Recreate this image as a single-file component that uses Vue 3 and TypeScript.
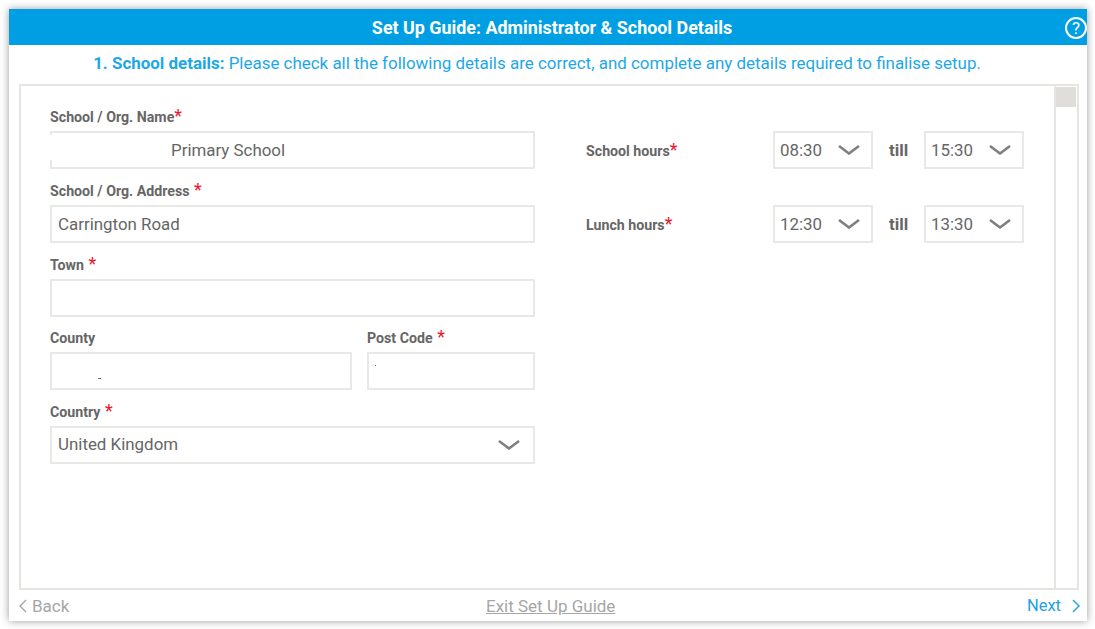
<template>
  <div class="page">
    <div class="guide">
      <header class="guide-head">
        <h1 class="guide-title">Set Up Guide: Administrator &amp; School Details</h1>
        <span class="help">?</span>
      </header>
      <p class="intro"><b>1. School details:</b> Please check all the following details are correct, and complete any details required to finalise setup.</p>
      <div class="panel">
        <div class="panel-body">
          <div class="address">
            <div class="field col-2">
              <label>School / Org. Name<span class="req tight">*</span></label>
              <div class="input name-input">Primary School<span class="redact"></span></div>
            </div>
            <div class="field col-2">
              <label>School / Org. Address <span class="req">*</span></label>
              <div class="input">Carrington Road</div>
            </div>
            <div class="field col-2">
              <label>Town <span class="req">*</span></label>
              <div class="input"></div>
            </div>
            <div class="field">
              <label>County</label>
              <div class="input"><span class="speck county-speck"></span></div>
            </div>
            <div class="field">
              <label>Post Code <span class="req">*</span></label>
              <div class="input"><span class="speck post-speck"></span></div>
            </div>
            <div class="field col-2">
              <label>Country <span class="req">*</span></label>
              <div class="input select country">
                <span>United Kingdom</span>
                <svg class="chev" width="22" height="10" viewBox="0 0 22 10" fill="none" stroke="#808080" stroke-width="2.6"><polyline points="1,1 11,8.5 21,1" /></svg>
              </div>
            </div>
          </div>
          <div class="hours">
            <div v-for="row in hours" :key="row.label" class="hours-row">
              <label class="hours-label">{{ row.label }}<span class="req tight">*</span></label>
              <div class="input select time">
                <span>{{ row.from }}</span>
                <svg class="chev" width="22" height="10" viewBox="0 0 22 10" fill="none" stroke="#808080" stroke-width="2.6"><polyline points="1,1 11,8.5 21,1" /></svg>
              </div>
              <span class="till">till</span>
              <div class="input select time">
                <span>{{ row.to }}</span>
                <svg class="chev" width="22" height="10" viewBox="0 0 22 10" fill="none" stroke="#808080" stroke-width="2.6"><polyline points="1,1 11,8.5 21,1" /></svg>
              </div>
            </div>
          </div>
        </div>
        <div class="scrollbar"><div class="thumb"></div></div>
      </div>
      <footer class="guide-foot">
        <a class="back">
          <svg width="8" height="14" viewBox="0 0 8 14" fill="none" stroke="#a6a6a6" stroke-width="1.4"><polyline points="7,1 1,7 7,13" /></svg>
          Back
        </a>
        <a class="exit">Exit Set Up Guide</a>
        <a class="next">
          Next
          <svg width="8" height="14" viewBox="0 0 8 14" fill="none" stroke="#1f9fe6" stroke-width="1.4"><polyline points="1,1 7,7 1,13" /></svg>
        </a>
      </footer>
    </div>
  </div>
</template>

<script setup lang="ts">
interface HoursRow { label: string; from: string; to: string }

const hours: HoursRow[] = [
  { label: 'School hours', from: '08:30', to: '15:30' },
  { label: 'Lunch hours', from: '12:30', to: '13:30' }
]
</script>

<style>
html, body { background: #fff; }
</style>

<style scoped>
.page { width: 1095px; height: 629px; box-sizing: border-box; padding: 9px 8px 8px 9px; font-family: Roboto, "Liberation Sans", sans-serif; overflow: hidden; }
.guide { height: 612px; background: #fff; box-shadow: 0 0 8px rgba(0,0,0,0.4); display: flex; flex-direction: column; }
.guide-head { position: relative; height: 36px; flex: none; box-sizing: border-box; padding-left: 8px; background: #009fe3; display: flex; align-items: center; justify-content: center; }
.guide-title { margin: 0; color: #fff; font-size: 17.9px; font-weight: 700; }
.help { position: absolute; right: 0; top: 8px; width: 18px; height: 18px; border: 2px solid #fff; border-radius: 50%; color: #fff; font-size: 17px; line-height: 18px; text-align: center; }
.intro { margin: 0; height: 39px; flex: none; box-sizing: border-box; padding: 8px 22px 0 0; text-align: center; color: #1ea7e8; font-size: 16.95px; line-height: 20px; }
.panel { margin: 0 8px 0 10px; height: 506px; box-sizing: border-box; border: 2px solid #e6e5e1; display: flex; flex: none; }
.panel-body { flex: 1; display: flex; padding: 21px 0 0 29px; }
.address { width: 485px; display: grid; grid-template-columns: 302px 168px; column-gap: 15px; grid-auto-rows: 73.75px; align-content: start; }
.field { display: flex; flex-direction: column; }
.col-2 { grid-column: span 2; }
label { height: 24px; color: #666; font-size: 14.2px; font-weight: 700; line-height: 20px; }
.req { margin-left: 1px; color: #f0142c; font-size: 18px; font-weight: 400; line-height: 14px; }
.tight { margin-left: 0; }
.input { position: relative; height: 38px; box-sizing: border-box; border: 2px solid #e8e8e6; padding: 0 6px; color: #666; font-size: 16.9px; line-height: 34px; }
.name-input { padding-left: 119px; }
.redact { position: absolute; left: -2px; top: 2px; width: 2px; height: 25px; background: #fff; }
.speck { position: absolute; background: #666; }
.county-speck { left: 46px; top: 24px; width: 3px; height: 1px; }
.post-speck { left: 6px; top: 11px; width: 1px; height: 1px; }
.select { display: flex; align-items: center; justify-content: space-between; padding-right: 13px; }
.country { padding-bottom: 2px; }
.country .chev { margin-top: 2px; }
.hours { display: flex; flex-direction: column; margin-left: 51px; padding-top: 24px; }
.hours-row { height: 74px; display: flex; align-items: flex-start; }
.hours-label { width: 187px; height: 38px; line-height: 41px; }
.time { width: 100px; padding-left: 5px; padding-right: 11px; }
.till { width: 51px; height: 38px; text-align: center; color: #666; font-size: 17px; font-weight: 700; line-height: 38px; }
.scrollbar { width: 23px; box-sizing: border-box; flex: none; margin-left: auto; border-left: 2px solid #e6e5e1; padding-top: 1px; }
.thumb { width: 20px; height: 20px; background: #dfdedb; }
.guide-foot { flex: 1; display: flex; align-items: center; justify-content: space-between; position: relative; padding: 0 7px 0 10px; font-size: 17px; }
.back { color: #a6a6a6; display: flex; align-items: center; gap: 5px; }
.exit { position: absolute; left: 477px; color: #a6a6a6; text-decoration: underline; }
.next { color: #1f9fe6; font-size: 16.5px; display: flex; align-items: center; gap: 11px; }
</style>
